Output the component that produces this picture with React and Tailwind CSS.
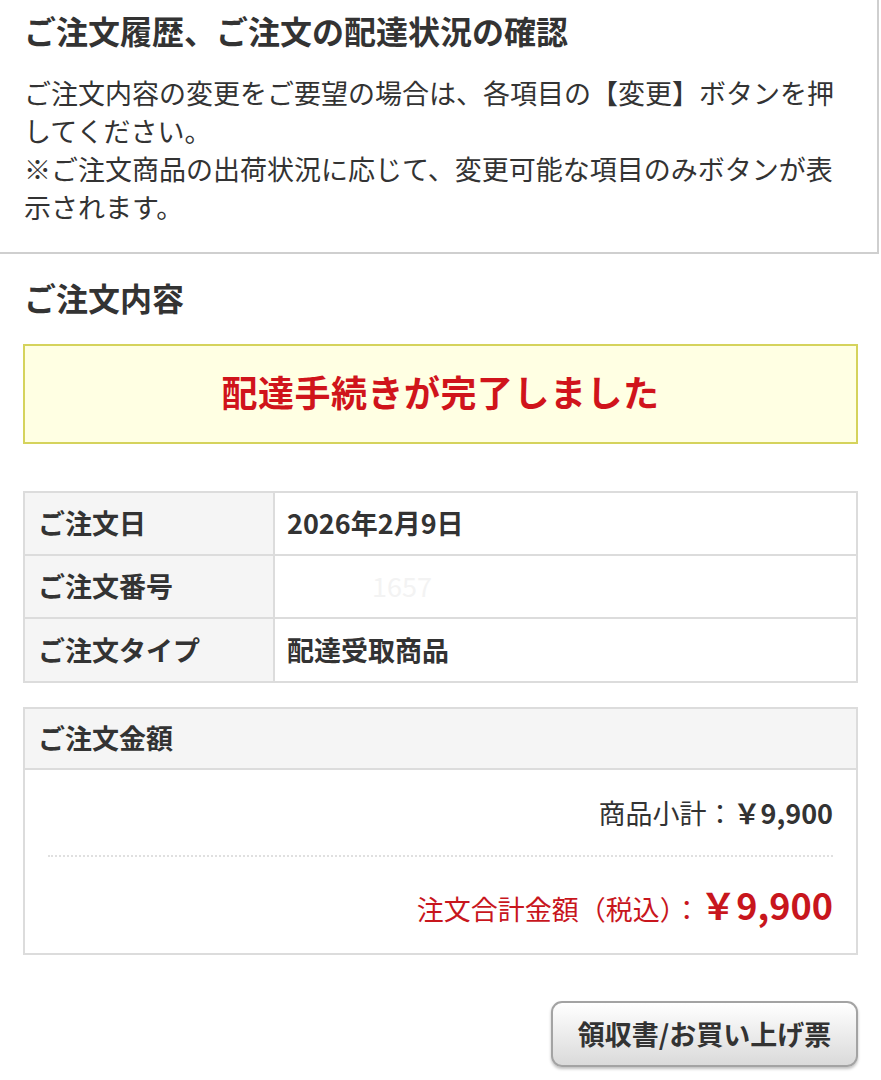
const font = { fontFamily: '"Noto Sans CJK JP", "Noto Sans", sans-serif' };

const rows = [
  { label: "ご注文日", value: "2026年2月9日" },
  { label: "ご注文番号", value: "", redacted: true },
  { label: "ご注文タイプ", value: "配達受取商品" },
];

export default function App() {
  return (
    <div className="w-[881px] min-h-[1080px] bg-white text-[#333]" style={font}>
      {/* Intro */}
      <div className="w-[879px] border-r-2 border-b-2 border-[#cfcfcf] px-[24px] pt-[10px] pb-[26px]">
        <h1 className="text-[32px] leading-[40px] font-bold text-[#333]">
          ご注文履歴、ご注文の配達状況の確認
        </h1>
        <p className="mt-[24px] w-[833px] text-[27px] leading-[38px] text-[#333]">
          ご注文内容の変更をご要望の場合は、各項目の【変更】ボタンを押してください。
          <br />
          ※ご注文商品の出荷状況に応じて、変更可能な項目のみボタンが表示されます。
        </p>
      </div>

      {/* Order contents */}
      <div className="px-[23px] pt-[23px]">
        <h2 className="pl-px text-[32px] leading-[40px] font-bold">ご注文内容</h2>

        <div className="mt-[27px] h-[100px] flex items-center justify-center pb-[7px] bg-[#ffffe3] border-2 border-[#d5d35c]">
          <span className="text-[36px] leading-[44px] font-bold text-[#d0141b] tracking-[0.5px]">
            配達手続きが完了しました
          </span>
        </div>

        <div className="mt-[47px] border-2 border-[#dcdcdc]">
          {rows.map((r, i) => (
            <div
              key={r.label}
              className={`flex ${i < rows.length - 1 ? "h-[63px] border-b-2 border-[#dcdcdc]" : "h-[62px]"}`}
            >
              <div className="w-[250px] shrink-0 bg-[#f5f5f5] border-r-2 border-[#dcdcdc] flex items-center pl-[13px] text-[27px] font-bold">
                {r.label}
              </div>
              <div className="flex-1 flex items-center pl-[12px] text-[27px] font-bold">
                {r.redacted ? (
                  <span className="pl-[85px] text-[#f3f3f3] font-normal">1657</span>
                ) : (
                  r.value
                )}
              </div>
            </div>
          ))}
        </div>

        {/* Amount */}
        <div className="mt-[24px] border-2 border-[#dcdcdc]">
          <div className="h-[61px] bg-[#f5f5f5] border-b-2 border-[#dcdcdc] flex items-center pl-[13px] text-[27px] font-bold">
            ご注文金額
          </div>
          <div className="px-[23px] pt-[23px] pb-[20px]">
            <div className="text-right text-[27px] leading-[40px]">
              商品小計：<span className="font-semibold">￥9,900</span>
            </div>
            <div className="mt-[22px] border-t-2 border-dotted border-[#e0e0e0]" />
            <div className="mt-[23px] text-right text-[#c8161d] text-[27px] leading-[48px]">
              注文合計金額（税込）：
              <span className="text-[36px] font-bold">￥9,900</span>
            </div>
          </div>
        </div>

        <div className="mt-[46px] flex justify-end">
          <button
            className="w-[307px] h-[66px] rounded-[11px] border-2 border-[#a3a3a3] bg-gradient-to-b from-white to-[#dadada] shadow-[0_2px_3px_rgba(0,0,0,0.25)] text-[27px] font-bold text-[#333]"
            style={font}
          >
            領収書/お買い上げ票
          </button>
        </div>
      </div>
    </div>
  );
}
